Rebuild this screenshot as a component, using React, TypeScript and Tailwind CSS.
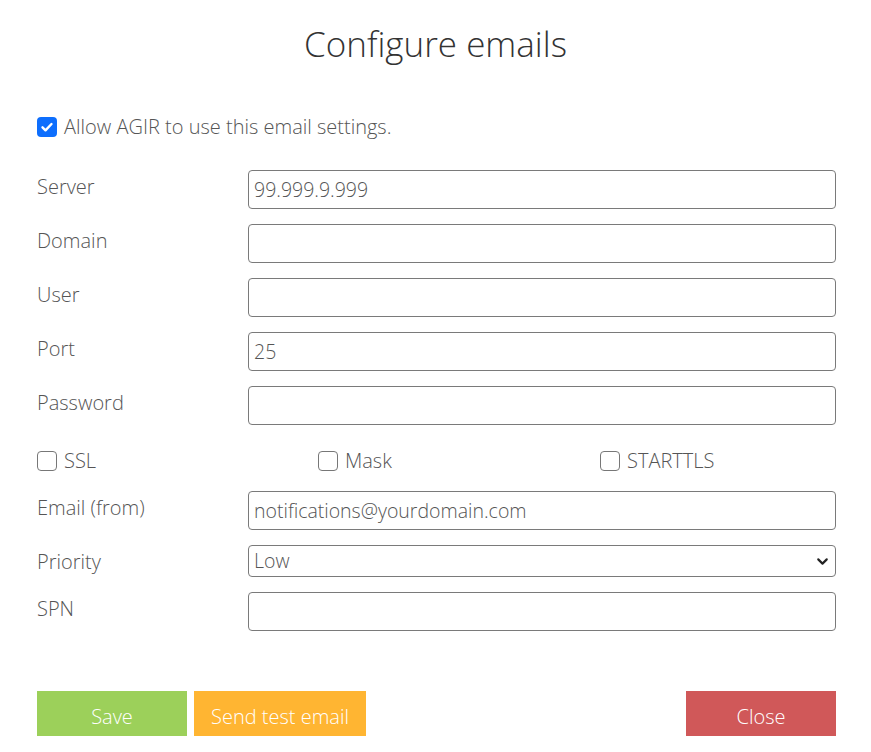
import { ChevronDown } from "lucide-react"

const fields = [
    { label: "Server", value: "99.999.9.999" },
    { label: "Domain", value: "" },
    { label: "User", value: "" },
    { label: "Port", value: "25" },
    { label: "Password", value: "" },
]

function Row({ label, children, className = "" }: { label: string; children: React.ReactNode; className?: string }) {
    return (
        <div className={`flex items-start ${className}`}>
            <label className="w-[211px] shrink-0 pt-[4px] leading-[26px]">{label}</label>
            {children}
        </div>
    )
}

function TextBox({ value }: { value: string }) {
    return (
        <input
            readOnly
            value={value}
            className="flex-1 h-[39px] border border-[#7a7a7a] rounded-[4px] px-[5px] text-[19.5px] text-[#555] outline-none"
        />
    )
}

function Check({ label, checked = false }: { label: string; checked?: boolean }) {
    return (
        <label className="flex items-center gap-[7px]">
            {checked ? (
                <span className="w-[20px] h-[20px] rounded-[4px] bg-[#0d6efd] flex items-center justify-center">
                    <svg width="14" height="14" viewBox="0 0 14 14">
                        <path d="M2.5 7.3l3 3 6-6.3" stroke="#fff" strokeWidth="2.4" fill="none" strokeLinecap="round" strokeLinejoin="round" />
                    </svg>
                </span>
            ) : (
                <span className="w-[20px] h-[20px] rounded-[4px] border border-[#777] bg-white" />
            )}
            <span>{label}</span>
        </label>
    )
}

export default function App() {
    return (
        <div className="w-[871px] h-[752px] overflow-hidden bg-white text-[#555] text-[20px] font-light" style={{ fontFamily: '"Open Sans", "Liberation Sans", sans-serif' }}>
            <h1 className="text-center text-[35px] leading-[48px] pt-[20px] text-[#333] font-light">Configure emails</h1>

            <div className="pl-[37px] pr-[35px] mt-[44px]">
                <Check label="Allow AGIR to use this email settings." checked />

                <div className="mt-[28px] flex flex-col gap-[15px]">
                    {fields.map(f => (
                        <Row key={f.label} label={f.label}>
                            <TextBox value={f.value} />
                        </Row>
                    ))}
                </div>

                <div className="flex mt-[21px]">
                    <div className="w-[281px]"><Check label="SSL" /></div>
                    <div className="w-[282px]"><Check label="Mask" /></div>
                    <div><Check label="STARTTLS" /></div>
                </div>

                <Row label="Email (from)" className="mt-[15px]">
                    <TextBox value="notifications@yourdomain.com" />
                </Row>

                <Row label="Priority" className="mt-[15px]">
                    <div className="relative flex-1 h-[32px] border border-[#7a7a7a] rounded-[4px] px-[5px] flex items-center text-[19.5px]">
                        <span>Low</span>
                        <ChevronDown className="absolute right-[4px] top-[7px] w-[17px] h-[17px] text-[#222]" strokeWidth={3} />
                    </div>
                </Row>

                <Row label="SPN" className="mt-[15px]">
                    <TextBox value="" />
                </Row>

                <div className="flex mt-[60px] text-white text-[20px]">
                    <button className="w-[150px] h-[45px] pt-[6px] bg-[#9cd05a]">Save</button>
                    <button className="w-[172px] h-[45px] pt-[6px] bg-[#ffb532] ml-[7px]">Send test email</button>
                    <button className="w-[150px] h-[45px] pt-[6px] bg-[#d05859] ml-auto">Close</button>
                </div>
            </div>
        </div>
    )
}
